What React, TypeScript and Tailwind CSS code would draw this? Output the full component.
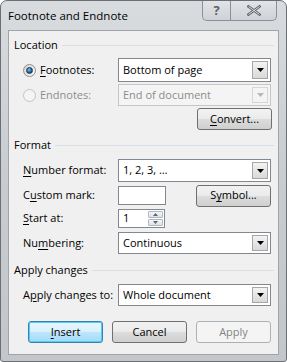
import React from 'react'

const font = { fontFamily: '"Open Sans", "Noto Sans", sans-serif' }

function Arrow({ disabled }: { disabled?: boolean }) {
  return (
    <div
      className={`flex h-full w-[16px] items-center justify-center border ${
        disabled
          ? 'border-[#d6d6d6] bg-[#f4f4f4]'
          : 'border-[#a7a7a7] bg-gradient-to-b from-[#f3f3f3] to-[#d9d9d9]'
      }`}
    >
      <svg width="7" height="4" viewBox="0 0 7 4">
        <path d="M0 0h7L3.5 4z" fill={disabled ? '#b7b7b7' : '#000'} />
      </svg>
    </div>
  )
}

function Dropdown({ value, disabled, h }: { value: string; disabled?: boolean; h: string }) {
  return (
    <div
      className={`flex w-[153px] items-stretch border p-[2px] ${h} ${
        disabled ? 'border-[#c6c6c6] bg-[#f4f4f4] text-[#8d8d8d]' : 'border-[#838790] bg-white text-black'
      }`}
    >
      <div className="flex flex-1 items-center pl-[2px]">{value}</div>
      <Arrow disabled={disabled} />
    </div>
  )
}

function Button({
  children,
  variant = 'normal',
  className = '',
}: {
  children: React.ReactNode
  variant?: 'normal' | 'default' | 'disabled'
  className?: string
}) {
  const styles = {
    normal:
      'border-[#707070] bg-[linear-gradient(#f2f2f2,#ebebeb_48%,#dddddd_50%,#cfcfcf)] text-black',
    default:
      'border-[#3c7fb1] bg-[linear-gradient(#eaf6fd,#d9f0fc_48%,#bee6fd_50%,#a7d9f5)] text-black shadow-[inset_0_0_0_1px_#48d0f5]',
    disabled: 'border-[#adb2b5] bg-[#f4f4f4] text-[#838383]',
  }
  return (
    <div
      className={`flex h-[22px] w-[75px] items-center justify-center rounded-[3px] border ${styles[variant]} ${className}`}
    >
      {children}
    </div>
  )
}

function GroupLabel({ text, className = '' }: { text: string; className?: string }) {
  return (
    <div className={`flex h-[16px] items-center pl-[5px] pr-[4px] ${className}`}>
      <span className="pr-[4px]">{text}</span>
      <div className="h-px flex-1 bg-[#d5dfe5]" />
    </div>
  )
}

function Radio({ checked, disabled }: { checked?: boolean; disabled?: boolean }) {
  return (
    <div
      className={`flex h-[13px] w-[13px] items-center justify-center rounded-full border ${
        disabled
          ? 'border-[#c4c4c4] bg-[#f4f4f4]'
          : 'border-[#8e8f8f] bg-gradient-to-br from-[#d2d2d2] to-[#fbfbfb]'
      }`}
    >
      {checked && (
        <div className="h-[7px] w-[7px] rounded-full border border-[#1b3a5a] bg-[radial-gradient(circle_at_40%_35%,#7ec4ee,#1f5d93_60%,#0c2e53)]" />
      )}
    </div>
  )
}

function U({ children }: { children: React.ReactNode }) {
  return <span className="underline underline-offset-[2px]">{children}</span>
}

function Row({
  label,
  h,
  className = '',
  children,
}: {
  label: React.ReactNode
  h: string
  className?: string
  children: React.ReactNode
}) {
  return (
    <div className={`flex items-center ${h} ${className}`}>
      <div className="w-[109px] pl-[14px]">{label}</div>
      {children}
    </div>
  )
}

export default function App() {
  return (
    <div
      style={font}
      className="flex h-[362px] w-[287px] flex-col rounded-t-[7px] rounded-b-[3px] border border-[#6b7076] bg-gradient-to-b from-[#d8dcdf] via-[#c8ccd0] to-[#c3c7cb] text-[11px] text-black"
    >
      {/* Title bar */}
      <div className="flex h-[29px] shrink-0 items-start">
        <div className="pl-[7px] pt-[6px] text-[11.5px] text-black">Footnote and Endnote</div>
        <div className="ml-auto mr-[9px] flex h-[20px] overflow-hidden rounded-b-[5px] border border-t-0 border-[#8b9096] bg-gradient-to-b from-[#e2e4e7] to-[#ced2d6]">
          <div className="flex w-[28px] items-center justify-center border-r border-[#8b9096] text-[13px] font-bold text-[#5b626b]">
            ?
          </div>
          <div className="flex w-[45px] items-center justify-center">
            <svg width="14" height="11" viewBox="0 0 14 11">
              <path
                d="M1.5 1.5L12.5 9.5M12.5 1.5L1.5 9.5"
                stroke="#5b626b"
                strokeWidth="2.6"
                strokeLinecap="square"
              />
              <path d="M1.5 1.5L12.5 9.5M12.5 1.5L1.5 9.5" stroke="#e9ecef" strokeWidth="0.9" />
            </svg>
          </div>
        </div>
      </div>

      {/* Client area */}
      <div className="mx-[7px] flex h-[325px] flex-col border border-[#a1a5aa] bg-[#f0f0f0]">
        <GroupLabel text="Location" className="mt-[6px]" />

        <div className="mt-[5px] flex h-[24px] items-center">
          <div className="flex w-[109px] items-center pl-[14px]">
            <Radio checked />
            <span className="pl-[4px]">
              <U>F</U>ootnotes:
            </span>
          </div>
          <Dropdown value="Bottom of page" h="h-[24px]" />
        </div>

        <div className="mt-[2px] flex h-[22px] items-center text-[#8d8d8d]">
          <div className="flex w-[109px] items-center pl-[14px]">
            <Radio disabled />
            <span className="pl-[4px]">Endnotes:</span>
          </div>
          <Dropdown value="End of document" disabled h="h-[22px]" />
        </div>

        <div className="mt-[2px] flex justify-end pr-[6px]">
          <Button>
            <span>
              <U>C</U>onvert...
            </span>
          </Button>
        </div>

        <GroupLabel text="Format" className="mt-[7px]" />

        <Row
          className="mt-[6px]"
          h="h-[23px]"
          label={
            <span>
              <U>N</U>umber format:
            </span>
          }
        >
          <Dropdown value="1, 2, 3, …" h="h-[23px]" />
        </Row>

        <Row
          className="mt-[3px]"
          h="h-[21px]"
          label={
            <span>
              C<U>u</U>stom mark:
            </span>
          }
        >
          <div className="h-[19px] w-[48px] border border-[#838790] bg-white" />
          <Button className="ml-[30px]">
            <span>
              S<U>y</U>mbol...
            </span>
          </Button>
        </Row>

        <Row
          className="mt-[3px]"
          h="h-[19px]"
          label={
            <span>
              <U>S</U>tart at:
            </span>
          }
        >
          <div className="flex h-[19px] w-[47px] items-stretch border border-[#838790] bg-white p-[1px]">
            <div className="flex flex-1 items-center pl-[3px]">1</div>
            <div className="flex w-[15px] flex-col gap-px">
              <div className="flex flex-1 items-center justify-center rounded-[1px] border border-[#b3b8bf] bg-gradient-to-b from-[#f5f6f8] to-[#dde1e6]">
                <svg width="5" height="3" viewBox="0 0 5 3">
                  <path d="M0 3h5L2.5 0z" fill="#4f6a86" />
                </svg>
              </div>
              <div className="flex flex-1 items-center justify-center rounded-[1px] border border-[#b3b8bf] bg-gradient-to-b from-[#f5f6f8] to-[#dde1e6]">
                <svg width="5" height="3" viewBox="0 0 5 3">
                  <path d="M0 0h5L2.5 3z" fill="#4f6a86" />
                </svg>
              </div>
            </div>
          </div>
        </Row>

        <Row
          className="mt-[4px]"
          h="h-[22px]"
          label={
            <span>
              Nu<U>m</U>bering:
            </span>
          }
        >
          <Dropdown value="Continuous" h="h-[22px]" />
        </Row>

        <GroupLabel text="Apply changes" className="mt-[8px]" />

        <Row
          className="mt-[6px]"
          h="h-[22px]"
          label={
            <span>
              A<U>p</U>ply changes to:
            </span>
          }
        >
          <Dropdown value="Whole document" h="h-[22px]" />
        </Row>

        <div className="mt-[15px] flex gap-[9px] pl-[19px]">
          <Button variant="default">
            <span>
              <U>I</U>nsert
            </span>
          </Button>
          <Button>Cancel</Button>
          <Button variant="disabled">Apply</Button>
        </div>
      </div>
    </div>
  )
}
